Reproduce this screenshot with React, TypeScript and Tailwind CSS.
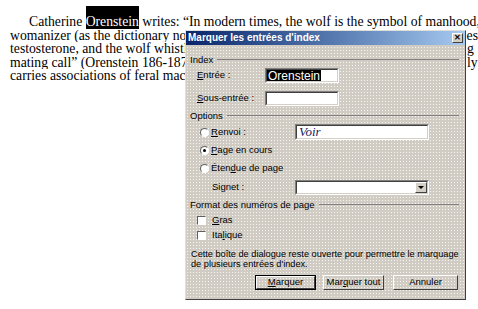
import React from "react";

const dialogFont = { fontFamily: '"Liberation Sans", Arial, sans-serif' };
const dots =
  "bg-[#d0ccc4] bg-[radial-gradient(circle,#f6f5f2_0.8px,transparent_0.9px)] bg-[length:3px_3px]";

function GroupHeader({ label }: { label: string }) {
  return (
    <div className="flex h-[12px] items-center gap-[4px] pr-[6px]">
      <span className="leading-[12px]">{label}</span>
      <div className="h-[2px] flex-1 border-t border-[#808080] border-b-white" />
    </div>
  );
}

function Sunken({ className, children }: { className: string; children?: React.ReactNode }) {
  return (
    <div className={`border border-t-[#808080] border-l-[#808080] border-r-white border-b-white ${className}`}>
      <div className="flex h-full w-full items-center border border-t-[#404040] border-l-[#404040] border-r-[#d4d0c8] border-b-[#d4d0c8] bg-white">
        {children}
      </div>
    </div>
  );
}

function Radio({ checked, children }: { checked?: boolean; children: React.ReactNode }) {
  return (
    <div className="flex h-[12px] items-center pl-[10px]">
      <span className="flex h-[9px] w-[9px] items-center justify-center rounded-full border border-t-[#606060] border-l-[#606060] border-r-white border-b-white bg-white">
        {checked && <span className="h-[3px] w-[3px] rounded-full bg-black" />}
      </span>
      <span className="ml-[2px] leading-[12px]">{children}</span>
    </div>
  );
}

function Check({ children }: { children: React.ReactNode }) {
  return (
    <div className="flex h-[12px] items-center pl-[7px]">
      <span className="h-[9px] w-[9px] border border-t-[#606060] border-l-[#606060] border-r-white border-b-white bg-white" />
      <span className="ml-[6px] leading-[12px]">{children}</span>
    </div>
  );
}

function Button({ children, main }: { children: React.ReactNode; main?: boolean }) {
  return (
    <div className={`h-[15px] ${main ? "border border-black" : ""}`}>
      <div className="flex h-full items-center justify-center border border-t-white border-l-white border-r-[#404040] border-b-[#404040]">
        {children}
      </div>
    </div>
  );
}

function Dialog() {
  return (
    <div
      className={`absolute left-[185px] top-[30px] flex h-[270px] w-[281px] flex-col border border-t-[#e0ded8] border-l-[#e0ded8] border-r-[#404040] border-b-[#404040] ${dots} text-[9.5px] text-black`}
      style={dialogFont}
    >
      <div className="flex h-[14px] items-center justify-between bg-gradient-to-r from-[#0a246a] to-[#a6caf0] pl-[2px] pr-[2px]">
        <span className="text-[10px] font-bold leading-[14px] text-white">Marquer les entrées d'index</span>
        <span className="flex h-[10px] w-[11px] items-center justify-center border border-t-white border-l-white border-r-[#404040] border-b-[#404040] bg-[#d4d0c8] text-[8px] font-bold leading-none">
          ✕
        </span>
      </div>

      <div className="flex flex-1 flex-col pl-[4px]">
        <div className="mt-[9px]">
          <GroupHeader label="Index" />
        </div>
        <div className="mt-[2px] flex h-[15px] items-center">
          <span className="w-[75px] pl-[7px]">
            <span className="underline">E</span>ntrée :
          </span>
          <Sunken className="h-[15px] w-[74px]">
            <span className="flex h-full items-center bg-black pl-[1px] pr-[1px] text-[12px] text-white">Orenstein</span>
          </Sunken>
        </div>
        <div className="mt-[8px] flex h-[15px] items-center">
          <span className="w-[75px] pl-[7px]">
            <span className="underline">S</span>ous-entrée :
          </span>
          <Sunken className="h-[15px] w-[74px]" />
        </div>
        <div className="mt-[4px]">
          <GroupHeader label="Options" />
        </div>
        <div className="mt-[2px] flex h-[16px] items-center">
          <div className="w-[105px]">
            <Radio>
              <span className="underline">R</span>envoi :
            </Radio>
          </div>
          <Sunken className="h-[16px] w-[134px]">
            <span
              className="pl-[2px] text-[13px] italic text-[#1c1c5a]"
              style={{ fontFamily: '"Liberation Serif", serif' }}
            >
              Voir
            </span>
          </Sunken>
        </div>
        <div className="mt-[4px]">
          <Radio checked>
            <span className="underline">P</span>age en cours
          </Radio>
        </div>
        <div className="mt-[6px]">
          <Radio>
            Éten<span className="underline">d</span>ue de page
          </Radio>
        </div>
        <div className="mt-[6px] flex h-[15px] items-center">
          <span className="w-[105px] pl-[22px]">Signet :</span>
          <Sunken className="h-[15px] w-[134px]">
            <div className="flex h-full flex-1 justify-end">
              <span className="flex h-full w-[12px] items-center justify-center border border-t-white border-l-white border-r-[#404040] border-b-[#404040] bg-[#d4d0c8]">
                <span className="h-0 w-0 border-x-[3px] border-t-[3px] border-x-transparent border-t-black" />
              </span>
            </div>
          </Sunken>
        </div>
        <div className="mt-[4px]">
          <GroupHeader label="Format des numéros de page" />
        </div>
        <div className="mt-[3px]">
          <Check>
            <span className="underline">G</span>ras
          </Check>
        </div>
        <div className="mt-[3px]">
          <Check>
            Ita<span className="underline">l</span>ique
          </Check>
        </div>
        <p className="mt-[8px] whitespace-nowrap pl-[1px] text-[9.2px] leading-[10px]">
          Cette boîte de dialogue reste ouverte pour permettre le marquage
          <br />
          de plusieurs entrées d'index.
        </p>
        <div className="mt-[6px] flex gap-[7px] pl-[65px]">
          <div className="w-[61px]">
            <Button main>
              <span className="underline">M</span>arquer
            </Button>
          </div>
          <div className="w-[61px]">
            <Button>
              Mar<span className="underline">q</span>uer tout
            </Button>
          </div>
          <div className="ml-[2px] w-[65px]">
            <Button>Annuler</Button>
          </div>
        </div>
      </div>
    </div>
  );
}

export default function App() {
  return (
    <div
      className="relative h-[309px] w-[478px] overflow-hidden bg-white text-[13.7px] text-black"
      style={{ fontFamily: '"Liberation Serif", "Times New Roman", serif' }}
    >
      <div className="flex flex-col pl-[10px] pt-[15px] leading-[13.5px]">
        <div className="whitespace-nowrap pl-[19px]">
          Catherine <span className="bg-black pt-[8px] text-white">Orenstein</span> writes: “In modern times, the
          wolf is the symbol of manhood, a
        </div>
        <div className="flex whitespace-nowrap">
          <span className="w-[457px] overflow-hidden">womanizer (as the dictionary notes), a predator driven by</span>
          <span>es</span>
        </div>
        <div className="flex whitespace-nowrap">
          <span className="w-[457px] overflow-hidden">testosterone, and the wolf whistle remains the</span>
          <span>g</span>
        </div>
        <div className="flex whitespace-nowrap">
          <span className="w-[457px] overflow-hidden">mating call” (Orenstein 186-187). The image</span>
          <span>ly</span>
        </div>
        <div className="whitespace-nowrap">carries associations of feral machismo</div>
      </div>
      <Dialog />
    </div>
  );
}
